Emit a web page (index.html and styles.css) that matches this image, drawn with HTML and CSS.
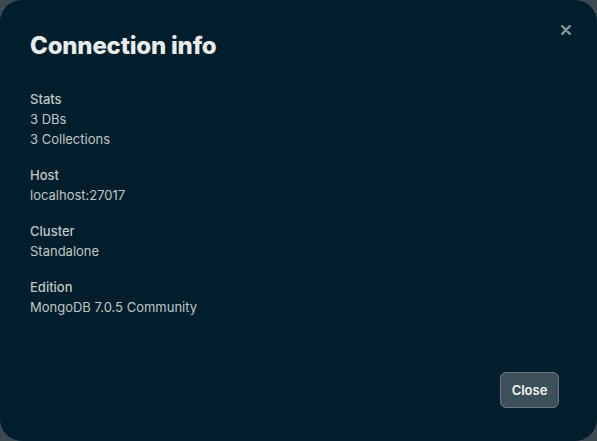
FILE: index.html
```html
<!DOCTYPE html>
<html>
<head>
<meta charset="utf-8">
<link rel="stylesheet" href="styles.css">
</head>
<body>
<div class="modal">
  <button class="close-x" aria-label="Close">
    <svg width="10" height="10" viewBox="0 0 10 10"><path d="M1.2 1.2 L8.8 8.8 M8.8 1.2 L1.2 8.8" stroke="#889397" stroke-width="2.4" stroke-linecap="round"/></svg>
  </button>
  <h1 class="title">Connection info</h1>
  <dl class="info">
    <div class="group">
      <dt class="label">Stats</dt>
      <dd class="value">3 DBs</dd>
      <dd class="value">3 Collections</dd>
    </div>
    <div class="group">
      <dt class="label">Host</dt>
      <dd class="value">localhost:27017</dd>
    </div>
    <div class="group">
      <dt class="label">Cluster</dt>
      <dd class="value">Standalone</dd>
    </div>
    <div class="group">
      <dt class="label">Edition</dt>
      <dd class="value">MongoDB 7.0.5 Community</dd>
    </div>
  </dl>
  <div class="footer">
    <button class="btn">Close</button>
  </div>
</div>
</body>
</html>
```
FILE: styles.css
```css
html, body {
  margin: 0;
  padding: 0;
  width: 597px;
  height: 441px;
  background: #3d4a52;
  overflow: hidden;
}
.modal {
  position: relative;
  box-sizing: border-box;
  width: 597px;
  height: 441px;
  background: #001e2b;
  border-radius: 22px;
  padding: 30px 30px 0 30px;
  display: flex;
  flex-direction: column;
  font-family: Inter, Lato, "Liberation Sans", sans-serif;
  color: #c1c7c6;
}
.close-x {
  position: absolute;
  top: 25px;
  right: 26px;
  width: 10px;
  height: 10px;
  padding: 0;
  border: 0;
  background: none;
  display: flex;
}
.title {
  margin: 0;
  font-size: 24px;
  line-height: 32px;
  font-weight: 800;
  color: #e8edeb;
  letter-spacing: -0.2px;
}
.info {
  margin: 27px 0 0 0;
  display: flex;
  flex-direction: column;
  gap: 16px;
}
.group {
  display: flex;
  flex-direction: column;
}
.label, .value {
  margin: 0;
  font-size: 13px;
  line-height: 20px;
}
.label {
  font-weight: 500;
}
.footer {
  margin-top: auto;
  display: flex;
  justify-content: flex-end;
  padding: 0 8px 33px 0;
}
.btn {
  width: 59px;
  height: 36px;
  box-sizing: border-box;
  background: #3d4f58;
  border: 1px solid #6b7a82;
  border-radius: 6px;
  color: #f4f6f6;
  font-family: Inter, Lato, "Liberation Sans", sans-serif;
  font-weight: 600;
  font-size: 13px;
  padding: 0;
}
```
